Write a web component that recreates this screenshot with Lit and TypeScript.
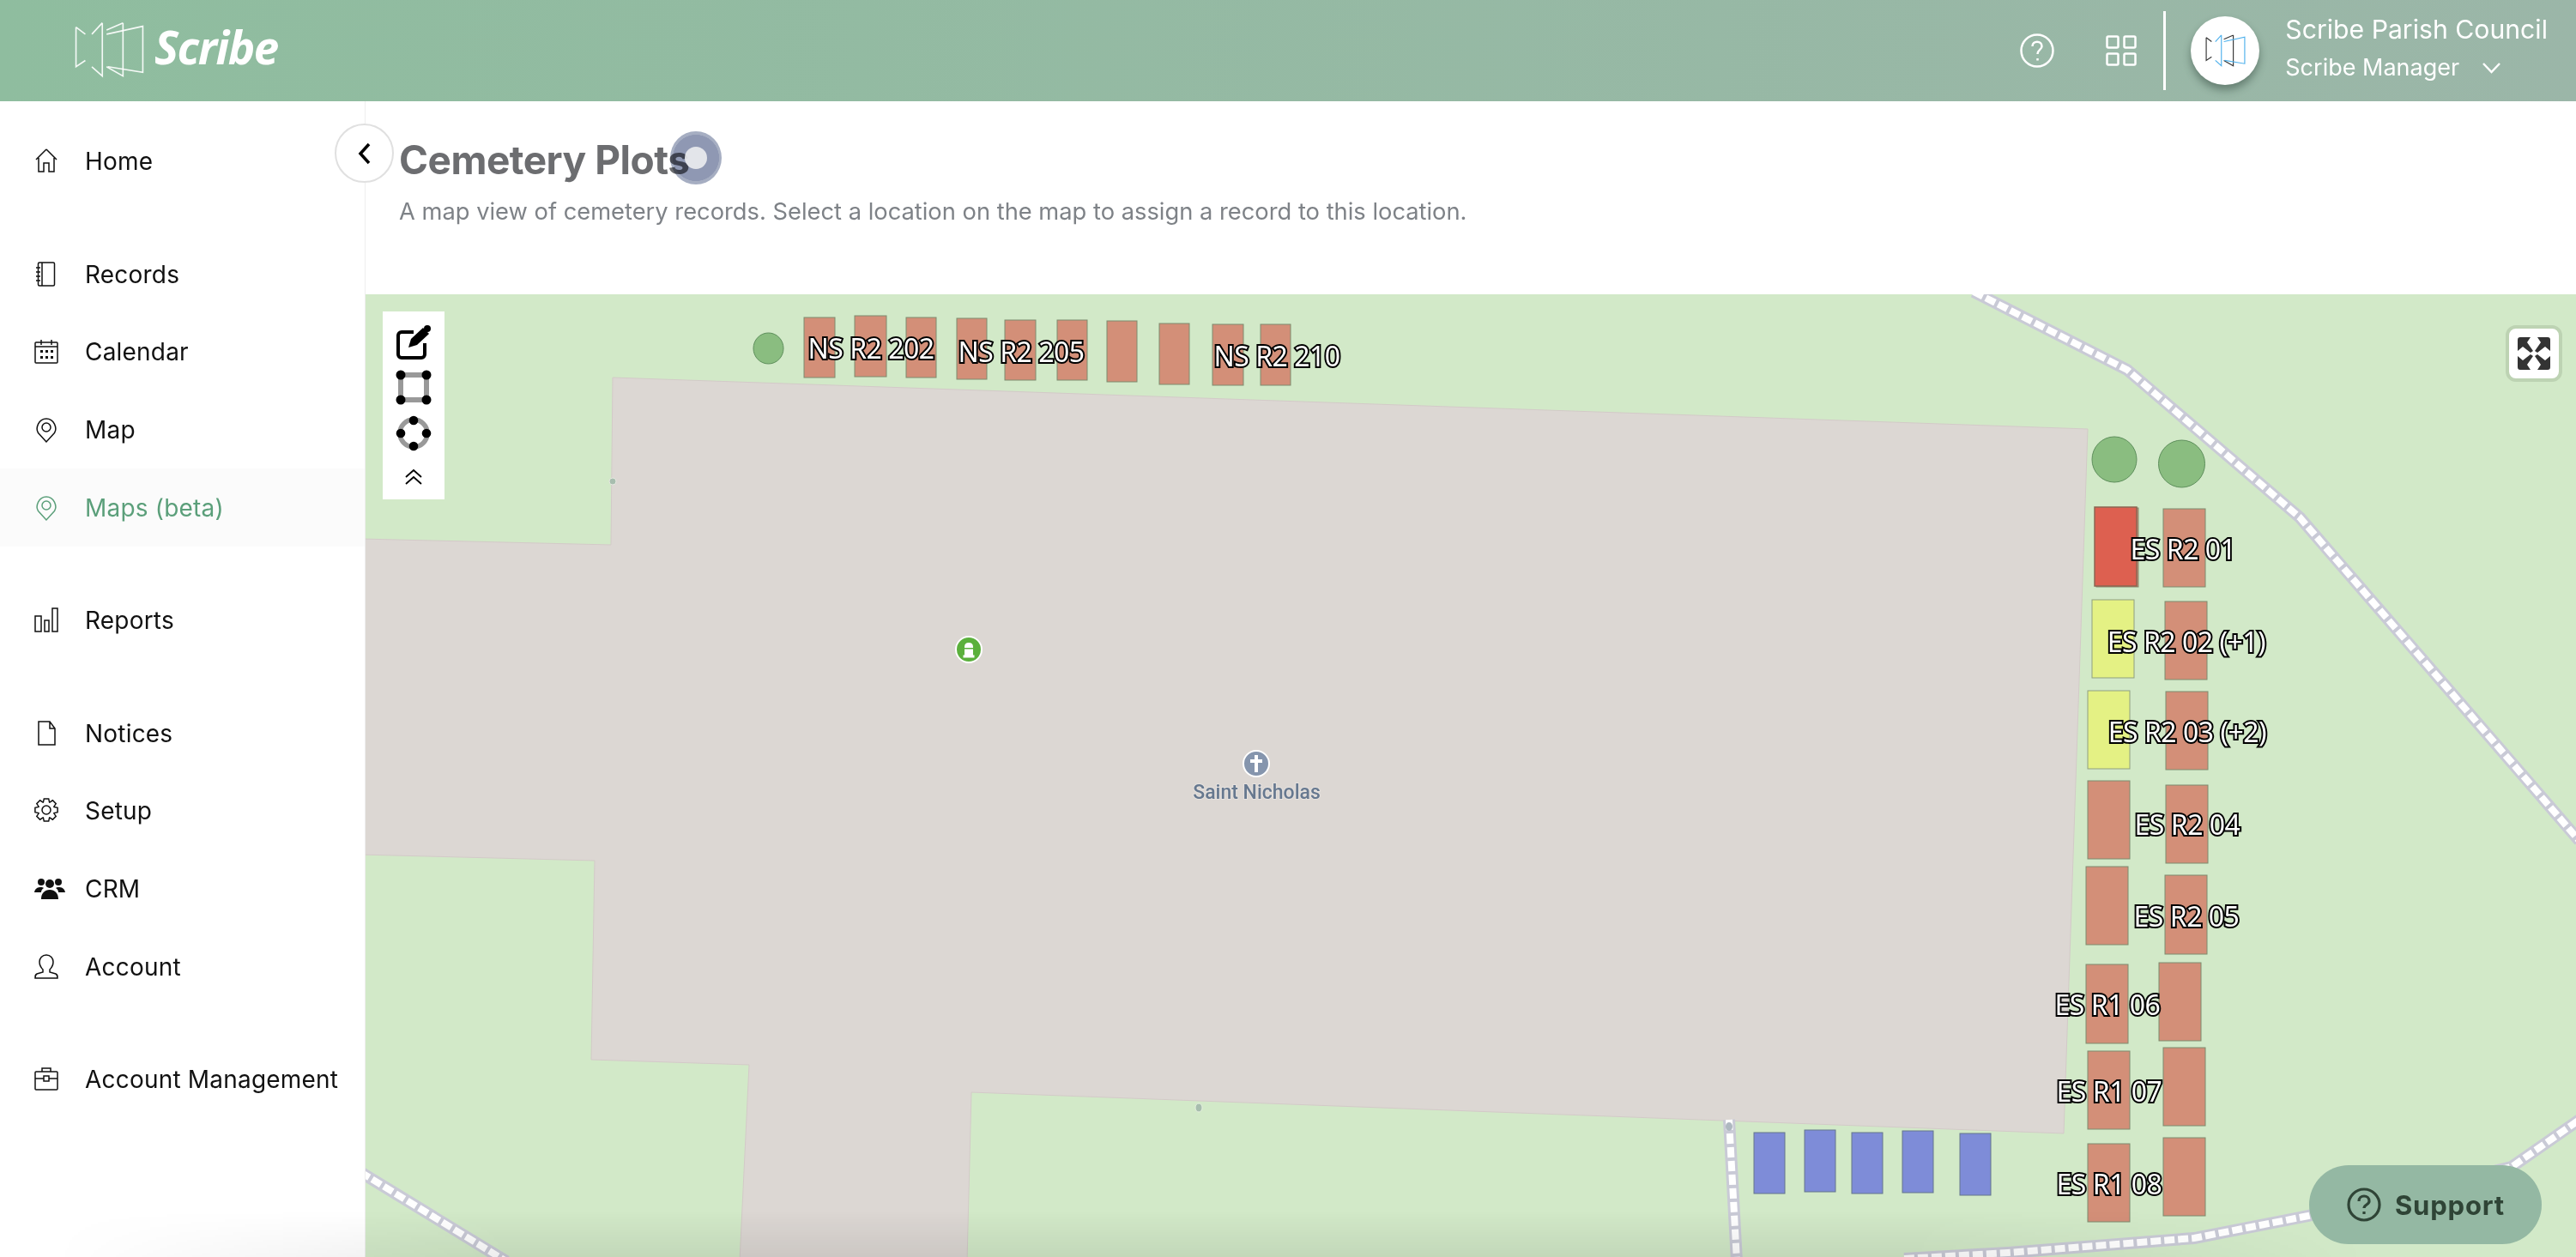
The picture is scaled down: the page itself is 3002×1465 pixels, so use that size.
import { LitElement, html, css, svg } from 'lit';
import { customElement } from 'lit/decorators.js';

type Box = [number, number, number, number];

const PLOTS: Box[] = [
  [937, 973, 370, 440], [996, 1033, 368, 439], [1056, 1091, 370, 440], [1115, 1150, 371, 442],
  [1171, 1207, 373, 443], [1232, 1267, 373, 443], [1290, 1325, 374, 445], [1351, 1386, 377, 448],
  [1413, 1449, 378, 449], [1469, 1504, 378, 449],
  [2443, 2492, 592, 684],
  [2521, 2570, 593, 684], [2523, 2572, 701, 792], [2524, 2573, 806, 897],
  [2433, 2482, 910, 1001], [2524, 2573, 915, 1006], [2431, 2480, 1010, 1101], [2523, 2572, 1020, 1112],
  [2431, 2480, 1124, 1216], [2516, 2565, 1122, 1213], [2433, 2482, 1225, 1316], [2521, 2570, 1221, 1312],
  [2433, 2482, 1333, 1424], [2521, 2570, 1326, 1417],
];
const RED: Box[] = [[2441, 2490, 591, 683]];
const YELLOW: Box[] = [[2438, 2487, 699, 790], [2433, 2482, 805, 896]];
const BLUE: Box[] = [
  [2044, 2080, 1320, 1391], [2103, 2139, 1317, 1389], [2158, 2194, 1320, 1391],
  [2217, 2253, 1318, 1390], [2284, 2320, 1321, 1393],
];
const TREES = [[895.5, 406, 17.5, 18], [2464, 535.5, 26, 26.5], [2542.5, 540.5, 27, 27.5]];
const LABELS: [string, number, number][] = [
  ['NS R2 202', 1015, 405], ['NS R2 205', 1190, 409], ['NS R2 210', 1488, 414],
  ['ES R2 01', 2544, 639], ['ES R2 02 (+1)', 2548, 747], ['ES R2 03 (+2)', 2549, 852],
  ['ES R2 04', 2549, 960], ['ES R2 05', 2548, 1067], ['ES R1 06', 2456, 1170],
  ['ES R1 07', 2458, 1271], ['ES R1 08', 2458, 1379],
];
const ROADS = [
  '2300,340 2479,431 2680,603 3006,980',
  '420,1366 590,1470',
  '2015,1305 2024,1470',
  '2219,1467 2340,1460 2557,1443 2690,1417 2927,1360 3006,1305',
];
const BUILDING = '714,440 2433,500 2405,1321 1132,1273 1127,1470 862,1470 873,1241 689,1235 693,1003 420,996 420,628 712,635';

function gearPath() {
  const c = 14;
  let d = '';
  for (let i = 0; i < 8; i++) {
    const a = (i * Math.PI) / 4;
    const pts = [[-0.38, 9.6], [-0.2, 13.4], [0.2, 13.4], [0.38, 9.6]];
    for (const [o, r] of pts) {
      const x = c + r * Math.cos(a + o);
      const y = c + r * Math.sin(a + o);
      d += `${d ? 'L' : 'M'}${x.toFixed(1)} ${y.toFixed(1)}`;
    }
  }
  return d + 'Z';
}

const I = {
  home: svg`<path d="M14 1 2 13M14 1l12 12M5 11v16h6V17h6v10h6V11"/>`,
  records: svg`<rect x="4.500" y="1" width="19" height="27" rx="1.500"/><path d="M9 1v27M2 7h5M2 12h5M2 17h5M2 22h5"/>`,
  calendar: svg`<rect x="1" y="4" width="26" height="24" rx="1"/><path d="M1 9h26M8 1v6M20 1v6"/><path class="dots" d="M7 13h3v3H7zM13 13h3v3h-3zM19 13h3v3h-3zM7 20h3v3H7zM13 20h3v3h-3zM19 20h3v3h-3z"/>`,
  pin: svg`<path d="M14 29 4.500 18.500C1 13 5 2 14 2s13 11 9.500 16.500Z"/><circle cx="14" cy="12" r="5"/>`,
  reports: svg`<rect x="1" y="10" width="7" height="18"/><rect x="12" y="15" width="5" height="13"/><rect x="21" y="1" width="6" height="27"/>`,
  notices: svg`<path d="M5 1h13l6 8v19H5ZM18 1v8h6"/>`,
  setup: svg`<path d="${gearPath()}"/><circle cx="14" cy="14" r="5"/>`,
  crm: svg`<g class="solid"><circle cx="8" cy="7" r="4"/><circle cx="18" cy="9" r="5"/><circle cx="28" cy="7" r="4"/><path d="M0 19c1-5 4-6 8-6 1 0 2 0 3 1-2 1-3 3-3 5ZM36 19c-1-5-4-6-8-6-1 0-2 0-3 1 2 1 3 3 3 5ZM8 27c0-7 4-11 10-11s10 4 10 11Z"/></g>`,
  account: svg`<path d="M14 1c-5 0-8 4-8 8 0 4 2 7 4 9v3l-7 2c-2 1-2 2-2 5h26c0-3 0-4-2-5l-7-2v-3c2-2 4-5 4-9 0-4-3-8-8-8Z"/>`,
  case: svg`<rect x="1" y="6" width="26" height="21" rx="1"/><path d="M9 6V2h10v4M1 14h10M17 14h10"/><rect x="11" y="11" width="6" height="6"/>`,
};

const NAV: { label: string; icon: keyof typeof I; active?: boolean }[][] = [
  [{ label: 'Home', icon: 'home' }],
  [
    { label: 'Records', icon: 'records' },
    { label: 'Calendar', icon: 'calendar' },
    { label: 'Map', icon: 'pin' },
    { label: 'Maps (beta)', icon: 'pin', active: true },
  ],
  [{ label: 'Reports', icon: 'reports' }],
  [
    { label: 'Notices', icon: 'notices' },
    { label: 'Setup', icon: 'setup' },
    { label: 'CRM', icon: 'crm' },
    { label: 'Account', icon: 'account' },
  ],
  [{ label: 'Account Management', icon: 'case' }],
];

const rect = (b: Box, cls: string) =>
  svg`<rect class=${cls} x=${b[0]} y=${b[2]} width=${b[1] - b[0]} height=${b[3] - b[2]}/>`;

@customElement('app-root')
export class AppRoot extends LitElement {
  static styles = css`
    :host {
      display: flex;
      flex-direction: column;
      position: relative;
      width: 100vw;
      height: 100vh;
      overflow: hidden;
      background: #fff;
      font-family: Inter, "Liberation Sans", sans-serif;
    }
    .top {
      flex: 0 0 118px;
      display: flex;
      align-items: center;
      background: linear-gradient(90deg, #8fbd9f, #9bb6a8);
      color: #fff;
      padding: 0 33px 0 87px;
    }
    .logo { display: flex; align-items: center; gap: 12px; flex: 1; }
    .logo svg { width: 81px; height: 66px; margin-top: -3px; }
    .logo svg path { fill: none; stroke: #fff; stroke-width: 5; opacity: .9; }
    .brand { font: italic 700 53px "Open Sans", sans-serif; letter-spacing: -1.5px; line-height: 66px; padding-bottom: 8px; }
    .help { width: 40px; height: 40px; margin-right: 60px; fill: none; stroke: #fff; stroke-width: 2.500; }
    .apps { width: 36px; height: 36px; fill: none; stroke: #fff; stroke-width: 2.500; margin-right: 31px; }
    .rule { width: 3px; height: 92px; background: #fff; margin-right: 29px; }
    .avatar {
      width: 80px; height: 80px; border-radius: 50%; background: #fff;
      box-shadow: 0 6px 10px rgba(40, 60, 50, .45);
      display: flex; align-items: center; justify-content: center;
      margin-right: 30px;
    }
    .avatar svg { width: 47px; height: 38px; fill: none; stroke-width: 6; }
    .who { display: flex; flex-direction: column; gap: 10px; padding-bottom: 6px; }
    .org { font-size: 30.200px; line-height: 36px; }
    .role { font-size: 27px; line-height: 34px; display: flex; align-items: center; gap: 27px; }
    .role svg { width: 21px; height: 13px; fill: none; stroke: #fff; stroke-width: 2.500; }

    .body { flex: 1; display: flex; min-height: 0; }
    nav {
      flex: 0 0 426px;
      box-sizing: border-box;
      padding-top: 25px;
      border-right: 1px solid #eee;
      display: flex;
      flex-direction: column;
      gap: 41px;
    }
    .item {
      height: 90.600px;
      display: flex;
      align-items: center;
      padding-left: 40px;
      font-size: 28px;
      color: #111;
      letter-spacing: .2px;
    }
    .item.on { background: #fbfbfb; color: #5b9f7a; }
    .ico { flex: 0 0 59px; display: flex; align-items: center; }
    .ico svg { height: 30px; width: 28px; overflow: visible; fill: none; stroke: currentColor; stroke-width: 1.500; }
    .ico .solid { fill: currentColor; stroke: none; }
    .ico .dots { fill: currentColor; stroke: none; }

    main { flex: 1; display: flex; flex-direction: column; min-width: 0; }
    .head { flex: 0 0 225px; box-sizing: border-box; padding: 40px 0 0 39px; }
    h1 { margin: 0; font-size: 46px; line-height: 56px; font-weight: 700; color: #6c6d70; letter-spacing: -.5px; }
    .head p { margin: 15px 0 0; font-size: 27.300px; line-height: 36px; color: #7e8287; }

    .map { flex: 1; position: relative; background: #d2e9c8; overflow: hidden; }
    .canvas { position: absolute; inset: 0; width: 100%; height: 100%; }
    .building { fill: #dcd7d3; stroke: #d3cac8; stroke-width: 1; }
    .casing { fill: none; stroke: #c9cad6; stroke-width: 14; }
    .dash { fill: none; stroke: #fff; stroke-width: 8; stroke-dasharray: 12 4; }
    .plot { fill: #d38f78; stroke: #7d8b6e; stroke-width: 1; }
    .red { fill: #dd6050; stroke: #8a6652; stroke-width: 1.500; }
    .yellow { fill: #e4f184; stroke: #8f9f80; stroke-width: 1; }
    .blue { fill: #7e8cd8; stroke: #65778a; stroke-width: 1; }
    .tree { fill: #8abd80; stroke: #5e8f5c; stroke-width: 1; }
    .label {
      font: 32px "Noto Sans", "Open Sans", sans-serif;
      letter-spacing: -.5px;
      fill: #fff; stroke: #000; stroke-width: 4; paint-order: stroke;
      text-anchor: middle; dominant-baseline: central;
    }
    .poi {
      font: 500 23px Roboto, sans-serif;
      fill: #66788f; stroke: #e6e2df; stroke-width: 2; paint-order: stroke;
      text-anchor: middle; dominant-baseline: central;
    }
    .tools {
      position: absolute; left: 20px; top: 20px;
      width: 72px; height: 219px; box-sizing: border-box;
      background: #fff;
      display: flex; flex-direction: column; align-items: center;
      padding-top: 16px; gap: 13px;
    }
    .tools svg { width: 40px; height: 40px; display: block; overflow: visible; }
    .tools .up { width: 20px; height: 18px; margin-top: 9px; fill: none; stroke: #000; stroke-width: 1.800; }
    .expand {
      position: absolute; right: 16px; top: 36px;
      width: 66px; height: 66px; box-sizing: border-box;
      background: #fff; border: 4px solid #bdd3b3; border-radius: 12px;
      display: flex; align-items: center; justify-content: center;
    }
    .expand svg { width: 38px; height: 38px; fill: #333; }

    .collapse {
      position: absolute; left: 390px; top: 144px;
      width: 69px; height: 69px; box-sizing: border-box;
      border-radius: 50%; background: #fff; border: 2px solid #e0e0e0;
      display: flex; align-items: center; justify-content: center;
    }
    .collapse svg { width: 16px; height: 26px; fill: none; stroke: #000; stroke-width: 3.500; }
    .blob {
      position: absolute; left: 781px; top: 153px;
      width: 60px; height: 62px; border-radius: 50%;
      background: radial-gradient(circle, #8f98b3 0 62%, #a6aec2 63%);
      mix-blend-mode: multiply;
    }
    .blob-core {
      position: absolute; left: 798px; top: 171px;
      width: 26px; height: 26px; border-radius: 50%;
      background: rgba(236, 237, 240, .9);
    }
    .shade {
      position: absolute; left: 60px; right: 240px; bottom: 0; height: 55px;
      pointer-events: none;
      background: linear-gradient(180deg, transparent, rgba(0, 0, 0, .07));
      -webkit-mask-image: linear-gradient(90deg, transparent, #000 20%, #000 80%, transparent);
      mask-image: linear-gradient(90deg, transparent, #000 20%, #000 80%, transparent);
    }
    .support {
      position: absolute; left: 2691px; top: 1358px;
      width: 271px; height: 92px; box-sizing: border-box;
      border-radius: 46px; background: #94b8a3;
      display: flex; align-items: center; padding-left: 44px; gap: 16px;
      color: #2f4436; font-size: 31px; font-weight: 700; letter-spacing: .8px;
    }
    .support svg { width: 40px; height: 40px; fill: none; stroke: #2f4436; stroke-width: 3.200; }
  `;

  private bookLines() {
    return svg`<path d="M52 45 85 70M52 45V185L85 163"/>
      <path d="M145 30 108 70M145 30V218L108 185"/>
      <path d="M218 30 160 55M218 30V218L160 185"/>
      <path d="M160 70 288 42V205L165 185"/>`;
  }

  private renderMap() {
    return svg`
      <polygon class="building" points=${BUILDING}/>
      ${ROADS.map((p) => svg`<polyline class="casing" points=${p}/><polyline class="dash" points=${p}/>`)}
      <circle cx="714" cy="561" r="4" fill="#a7bdae" stroke="#e5e8e0"/>
      <ellipse cx="1397" cy="1291" rx="4" ry="5" fill="#a7bdae" stroke="#e5efe0"/>
      <ellipse cx="2015" cy="1313" rx="4" ry="5" fill="#aeb8c0"/>
      ${TREES.map(([cx, cy, rx, ry]) => svg`<ellipse class="tree" cx=${cx} cy=${cy} rx=${rx} ry=${ry}/>`)}
      ${PLOTS.map((b) => rect(b, 'plot'))}
      ${RED.map((b) => rect(b, 'red'))}
      ${YELLOW.map((b) => rect(b, 'yellow'))}
      ${BLUE.map((b) => rect(b, 'blue'))}
      ${LABELS.map(([t, x, y]) => svg`<text class="label" x=${x} y=${y}>${t}</text>`)}
      <circle cx="1129" cy="757" r="15" fill="#5bb03c" stroke="#fff" stroke-width="2"/>
      <path d="M1124 754q0-5 5-5t5 5v1h-10Zm0 2.500h10v7h-10Zm-1.500 7h13v3h-13Z" fill="#fff"/>
      <circle cx="1464" cy="890" r="15" fill="#8595ad" stroke="#fff" stroke-width="2"/>
      <path d="M1462 880h4v5h5v4h-5v11h-4v-11h-5v-4h5Z" fill="#fff"/>
      <text class="poi" x="1464.500" y="923">Saint Nicholas</text>
    `;
  }

  render() {
    return html`
      <header class="top">
        <div class="logo">
          <svg viewBox="50 25 240 200">${this.bookLines()}</svg>
          <span class="brand">Scribe</span>
        </div>
        <svg class="help" viewBox="0 0 40 40"><circle cx="20" cy="20" r="18.500"/><path d="M14.500 15c0-7 11-7 11 0 0 4-5 4-5 9M20.500 29v2.500"/></svg>
        <svg class="apps" viewBox="0 0 36 36"><rect x="1.500" y="1.500" width="13" height="13" rx="1.500"/><rect x="21.500" y="1.500" width="13" height="13" rx="1.500"/><rect x="1.500" y="21.500" width="13" height="13" rx="1.500"/><rect x="21.500" y="21.500" width="13" height="13" rx="1.500"/></svg>
        <div class="rule"></div>
        <div class="avatar">
          <svg viewBox="50 25 240 200">
            <path stroke="#333" d="M52 45 85 70M52 45V185L85 163M218 30 160 55M218 30V218L160 185"/>
            <path stroke="#4db0ec" d="M145 30 108 70M145 30V218L108 185M160 70 288 42V205L165 185"/>
          </svg>
        </div>
        <div class="who">
          <div class="org">Scribe Parish Council</div>
          <div class="role">Scribe Manager
            <svg viewBox="0 0 21 13"><path d="M1 1l9.500 10L20 1"/></svg>
          </div>
        </div>
      </header>
      <div class="body">
        <nav>
          ${NAV.map((group) => html`<div>
            ${group.map((n) => html`<div class="item ${n.active ? 'on' : ''}">
              <span class="ico"><svg viewBox="0 0 28 30">${I[n.icon]}</svg></span>${n.label}
            </div>`)}
          </div>`)}
        </nav>
        <main>
          <div class="head">
            <h1>Cemetery Plots</h1>
            <p>A map view of cemetery records. Select a location on the map to assign a record to this location.</p>
          </div>
          <div class="map">
            <svg class="canvas" viewBox="426 343 2576 1122">${this.renderMap()}</svg>
            <div class="tools">
              <svg viewBox="0 0 40 40">
                <path d="M20 8H6a4 4 0 0 0-4 4v22a4 4 0 0 0 4 4h23a4 4 0 0 0 4-4V21" fill="none" stroke="#000" stroke-width="4"/>
                <path d="M14 26l3-10L31 3l7 7-14 13Z" fill="#000"/>
                <circle cx="36" cy="4" r="4" fill="#000"/>
              </svg>
              <svg viewBox="0 0 40 40">
                <rect x="5" y="5" width="30" height="29" fill="none" stroke="#999" stroke-width="6"/>
                <circle cx="5" cy="5" r="5.500"/><circle cx="35" cy="5" r="5.500"/><circle cx="5" cy="34" r="5.500"/><circle cx="35" cy="34" r="5.500"/>
              </svg>
              <svg viewBox="0 0 40 40">
                <circle cx="20" cy="20" r="16" fill="none" stroke="#999" stroke-width="5.500"/>
                <circle cx="20" cy="5" r="5.300"/><circle cx="35" cy="20" r="5.300"/><circle cx="20" cy="35" r="5.300"/><circle cx="5" cy="20" r="5.300"/>
              </svg>
              <svg class="up" viewBox="0 0 20 18"><path d="M1 9l9-8 9 8M1 17l9-8 9 8"/></svg>
            </div>
            <div class="expand">
              <svg viewBox="0 0 38 38">
                <path d="M3 0h12l-4 6 7 10-3 2L6 11l-6 5V3a3 3 0 0 1 3-3Z"/>
                <path transform="matrix(-1 0 0 1 38 0)" d="M3 0h12l-4 6 7 10-3 2L6 11l-6 5V3a3 3 0 0 1 3-3Z"/>
                <path transform="matrix(1 0 0 -1 0 38)" d="M3 0h12l-4 6 7 10-3 2L6 11l-6 5V3a3 3 0 0 1 3-3Z"/>
                <path transform="matrix(-1 0 0 -1 38 38)" d="M3 0h12l-4 6 7 10-3 2L6 11l-6 5V3a3 3 0 0 1 3-3Z"/>
              </svg>
            </div>
          </div>
        </main>
      </div>
      <div class="collapse"><svg viewBox="0 0 16 26"><path d="M13 2 3 13l10 11"/></svg></div>
      <div class="blob"></div>
      <div class="blob-core"></div>
      <div class="shade"></div>
      <div class="support">
        <svg viewBox="0 0 40 40"><circle cx="20" cy="20" r="18"/><path d="M14 16c0-8 12-8 12 0 0 4-6 4-6 8M20 28v3"/></svg>
        Support
      </div>
    `;
  }
}
